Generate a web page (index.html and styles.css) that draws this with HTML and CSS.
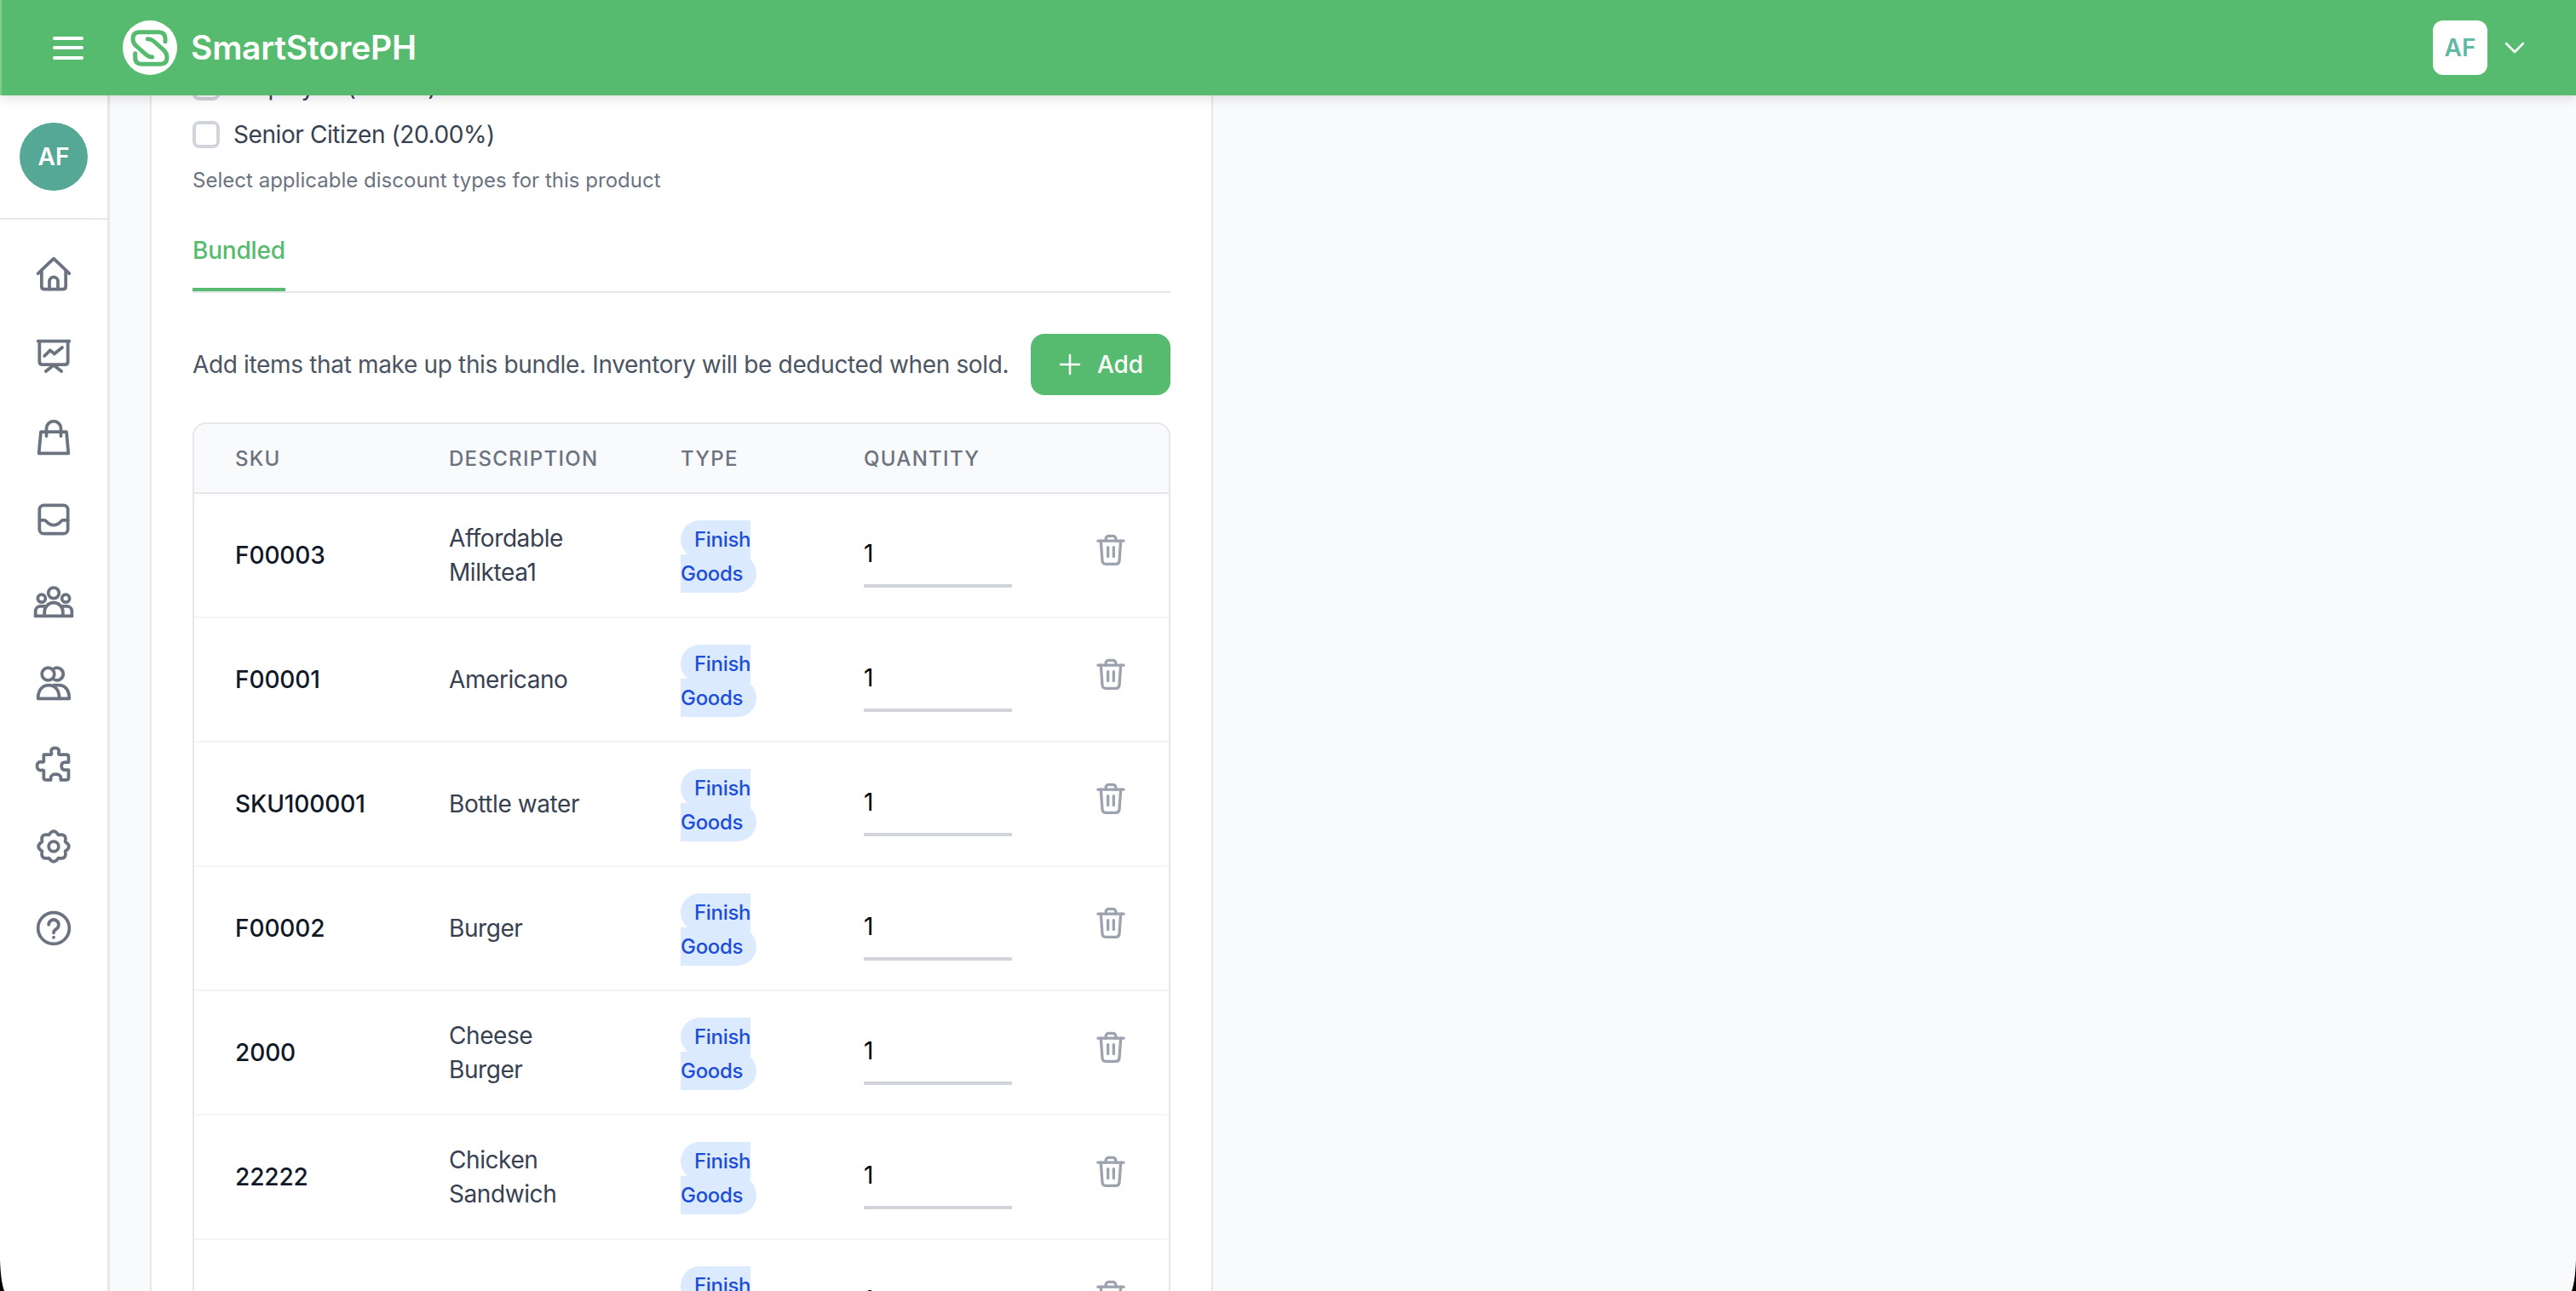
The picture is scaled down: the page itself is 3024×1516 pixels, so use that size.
FILE: index.html
```html
<!DOCTYPE html>
<html lang="en">
<head>
<meta charset="utf-8">
<title>SmartStorePH</title>
<link rel="stylesheet" href="styles.css">
</head>
<body>
<header class="topbar">
  <div class="topbar-left">
    <button class="menu-btn" aria-label="Menu">
      <svg width="36" height="30" viewBox="0 0 36 30" fill="none" stroke="#fff" stroke-width="4" stroke-linecap="round"><path d="M2 4H34M2 15H34M2 27H34"/></svg>
    </button>
    <svg class="logo" width="64" height="64" viewBox="42 30 192 192" fill="none">
      <circle cx="138" cy="126" r="96" fill="#fff"/>
      <g stroke="#57bb6f" stroke-width="15" stroke-linecap="round" stroke-linejoin="round">
        <path d="M192 104V94Q192 71 168 71H102Q78 71 78 95Q78 110 90 120L126 152Q134 159 146 159"/>
        <path d="M86 146V160Q86 184 110 184H174Q198 184 198 160Q198 145 186 134L150 102Q142 95 130 95"/>
      </g>
    </svg>
    <span class="brand">SmartStorePH</span>
  </div>
  <div class="topbar-right">
    <span class="user-chip">AF</span>
    <svg width="24" height="14" viewBox="0 0 24 14" fill="none" stroke="#fff" stroke-width="2.5" stroke-linecap="round" stroke-linejoin="round"><path d="M2 2L12 12L22 2"/></svg>
  </div>
</header>

<div class="shell">
  <aside class="sidebar">
    <div class="side-top"><span class="side-avatar">AF</span></div>
    <nav class="side-nav">
      <svg class="nav-icon" viewBox="0 0 24 24"><path d="M1 11.5L12 1L23 11.5"/><path d="M3.5 9.5V20.5Q3.5 22.5 5.5 22.5H18.5Q20.5 22.5 20.5 20.5V9.5"/><path d="M9 22.5V17A3 3 0 0 1 15 17V22.5"/></svg>
      <svg class="nav-icon" viewBox="0 0 24 24"><path d="M1 1.5H23"/><path d="M2 1.5V16Q2 18 4 18H20Q22 18 22 16V1.5"/><path d="M6.5 22.8L12 18.5L17.5 22.8"/><path d="M5.5 12L9.5 8L12.5 10.5L18 6"/></svg>
      <svg class="nav-icon" viewBox="0 0 24 24"><path d="M3 7.8H21L22.4 23H1.6Z"/><path d="M6.9 10.8V5.5A5.1 5.1 0 0 1 17.1 5.5V10.8"/></svg>
      <svg class="nav-icon" viewBox="0 0 24 24"><rect x="2" y="2" width="20" height="20" rx="3"/><path d="M2 12.5H5.5C7 12.5 7.5 16 12 16C16.5 16 17 12.5 18.5 12.5H22"/></svg>
      <svg class="nav-icon" viewBox="0 0 24 24"><circle cx="12" cy="6.2" r="3.8"/><circle cx="3.5" cy="10" r="2.7"/><circle cx="20.5" cy="10" r="2.7"/><path d="M-.8 22.4H24.8"/><path d="M-.8 22.4V19A3.5 3.5 0 0 1 2.7 15.5H5.5"/><path d="M5.5 22.4V19.5A6.5 6.5 0 0 1 18.5 19.5V22.4"/><path d="M18.5 15.5H21.3A3.5 3.5 0 0 1 24.8 19V22.4"/></svg>
      <svg class="nav-icon" viewBox="0 0 24 24"><circle cx="8.1" cy="5.7" r="4.4"/><path d="M12.5 1.7A4.4 4.4 0 1 1 12.5 9.7"/><path d="M1 23C1 17 4 13.5 8.5 13.5C13 13.5 16 17 16 23Z"/><path d="M12 13.6H16C20 13.6 23 17 23 23H16"/></svg>
      <svg class="nav-icon" viewBox="0 0 24 24"><path d="M5 4.9H10C10.6 4.9 10.6 3.7 10.3 2.7C10 .9 11.5.2 13 .2C14.5.2 16 .9 15.7 2.7C15.4 3.7 15.4 4.9 16 4.9H21Q22.5 4.9 22.5 6.4V10.2H20C18 10.2 17.5 11.7 17.5 12.9C17.5 14.2 18 15.7 20 15.7H22.5V21.2Q22.5 22.7 21 22.7H17V21.2C17 19.7 15.5 18.7 13.5 18.7C11.5 18.7 10 19.7 10 21.2V22.7H6.5Q5 22.7 5 21.2V16.2C5 15.7 4 15.7 3 15.9C1.2 16.2.3 14.5.3 12.9C.3 11.3 1.2 9.7 3 10C4 10.2 5 10.2 5 9.7V4.9Z"/></svg>
      <svg class="nav-icon" viewBox="0 0 24 24"><path d="M8.63 3.87Q12-1.3 15.37 3.87Q21.4 2.6 20.13 8.63Q25.3 12 20.13 15.37Q21.4 21.4 15.37 20.13Q12 25.3 8.63 20.13Q2.6 21.4 3.87 15.37Q-1.3 12 3.87 8.63Q2.6 2.6 8.63 3.87Z"/><circle cx="12" cy="12" r="3.5"/></svg>
      <svg class="nav-icon" viewBox="0 0 24 24"><circle cx="12" cy="12" r="11"/><path d="M8.5 9.5A3.5 3.5 0 1 1 14 12.4C13 13.1 12 13.7 12 15.2"/><path d="M12 18.4V18.5"/></svg>
    </nav>
  </aside>

  <main class="content">
    <section class="card">
      <div class="checks">
        <label class="check-row"><input type="checkbox" class="check"><span>Employee (0.00%)</span></label>
        <label class="check-row"><input type="checkbox" class="check"><span>Senior Citizen (20.00%)</span></label>
      </div>
      <p class="helper">Select applicable discount types for this product</p>

      <div class="tabs"><span class="tab">Bundled</span></div>

      <div class="bundle-bar">
        <p class="bundle-text">Add items that make up this bundle. Inventory will be deducted when sold.</p>
        <button class="add-btn">
          <svg width="28" height="28" viewBox="0 0 28 28" fill="none" stroke="#fff" stroke-width="2.5" stroke-linecap="round"><path d="M14 3V25M3 14H25"/></svg>
          Add
        </button>
      </div>

      <div class="table-wrap">
        <table class="items">
          <colgroup>
            <col class="col-sku"><col class="col-desc"><col class="col-type"><col class="col-qty"><col class="col-act">
          </colgroup>
          <thead>
            <tr><th>SKU</th><th>Description</th><th>Type</th><th>Quantity</th><th></th></tr>
          </thead>
          <tbody>
            <tr>
              <td class="sku">F00003</td><td class="desc">Affordable Milktea1</td>
              <td class="type"><span class="badge">Finish Goods</span></td>
              <td><input class="qty" type="text" value="1"></td>
              <td class="act"><svg class="trash" viewBox="0 0 24 24"><path d="M3 5.5H21"/><path d="M8.5 5.5V4A2 2 0 0 1 10.5 2H13.5A2 2 0 0 1 15.5 4V5.5"/><path d="M5 5.5L6 19.5Q6.2 21.8 8.5 21.8H15.5Q17.8 21.8 18 19.5L19 5.5"/><path d="M10 10V16.5M14 10V16.5"/></svg></td>
            </tr>
            <tr>
              <td class="sku">F00001</td><td class="desc">Americano</td>
              <td class="type"><span class="badge">Finish Goods</span></td>
              <td><input class="qty" type="text" value="1"></td>
              <td class="act"><svg class="trash" viewBox="0 0 24 24"><path d="M3 5.5H21"/><path d="M8.5 5.5V4A2 2 0 0 1 10.5 2H13.5A2 2 0 0 1 15.5 4V5.5"/><path d="M5 5.5L6 19.5Q6.2 21.8 8.5 21.8H15.5Q17.8 21.8 18 19.5L19 5.5"/><path d="M10 10V16.5M14 10V16.5"/></svg></td>
            </tr>
            <tr>
              <td class="sku">SKU100001</td><td class="desc">Bottle water</td>
              <td class="type"><span class="badge">Finish Goods</span></td>
              <td><input class="qty" type="text" value="1"></td>
              <td class="act"><svg class="trash" viewBox="0 0 24 24"><path d="M3 5.5H21"/><path d="M8.5 5.5V4A2 2 0 0 1 10.5 2H13.5A2 2 0 0 1 15.5 4V5.5"/><path d="M5 5.5L6 19.5Q6.2 21.8 8.5 21.8H15.5Q17.8 21.8 18 19.5L19 5.5"/><path d="M10 10V16.5M14 10V16.5"/></svg></td>
            </tr>
            <tr>
              <td class="sku">F00002</td><td class="desc">Burger</td>
              <td class="type"><span class="badge">Finish Goods</span></td>
              <td><input class="qty" type="text" value="1"></td>
              <td class="act"><svg class="trash" viewBox="0 0 24 24"><path d="M3 5.5H21"/><path d="M8.5 5.5V4A2 2 0 0 1 10.5 2H13.5A2 2 0 0 1 15.5 4V5.5"/><path d="M5 5.5L6 19.5Q6.2 21.8 8.5 21.8H15.5Q17.8 21.8 18 19.5L19 5.5"/><path d="M10 10V16.5M14 10V16.5"/></svg></td>
            </tr>
            <tr>
              <td class="sku">2000</td><td class="desc">Cheese Burger</td>
              <td class="type"><span class="badge">Finish Goods</span></td>
              <td><input class="qty" type="text" value="1"></td>
              <td class="act"><svg class="trash" viewBox="0 0 24 24"><path d="M3 5.5H21"/><path d="M8.5 5.5V4A2 2 0 0 1 10.5 2H13.5A2 2 0 0 1 15.5 4V5.5"/><path d="M5 5.5L6 19.5Q6.2 21.8 8.5 21.8H15.5Q17.8 21.8 18 19.5L19 5.5"/><path d="M10 10V16.5M14 10V16.5"/></svg></td>
            </tr>
            <tr>
              <td class="sku">22222</td><td class="desc">Chicken Sandwich</td>
              <td class="type"><span class="badge">Finish Goods</span></td>
              <td><input class="qty" type="text" value="1"></td>
              <td class="act"><svg class="trash" viewBox="0 0 24 24"><path d="M3 5.5H21"/><path d="M8.5 5.5V4A2 2 0 0 1 10.5 2H13.5A2 2 0 0 1 15.5 4V5.5"/><path d="M5 5.5L6 19.5Q6.2 21.8 8.5 21.8H15.5Q17.8 21.8 18 19.5L19 5.5"/><path d="M10 10V16.5M14 10V16.5"/></svg></td>
            </tr>
            <tr>
              <td class="sku"></td><td class="desc"></td>
              <td class="type"><span class="badge">Finish Goods</span></td>
              <td><input class="qty" type="text" value="1"></td>
              <td class="act"><svg class="trash" viewBox="0 0 24 24"><path d="M3 5.5H21"/><path d="M8.5 5.5V4A2 2 0 0 1 10.5 2H13.5A2 2 0 0 1 15.5 4V5.5"/><path d="M5 5.5L6 19.5Q6.2 21.8 8.5 21.8H15.5Q17.8 21.8 18 19.5L19 5.5"/><path d="M10 10V16.5M14 10V16.5"/></svg></td>
            </tr>
          </tbody>
        </table>
      </div>
    </section>
  </main>
</div>

<svg class="corner corner-left" width="6" height="36" viewBox="0 0 6 36"><path d="M0 0C.6 14 1.8 27 5 36H0Z"/></svg>
<svg class="corner corner-right" width="6" height="36" viewBox="0 0 6 36"><path d="M6 0C5.4 14 4.2 27 1 36H6Z"/></svg>
</body>
</html>
```
FILE: styles.css
```css
* { box-sizing: border-box; }

html, body {
  margin: 0;
  height: 100%;
  overflow: hidden;
}

body {
  display: flex;
  flex-direction: column;
  position: relative;
  font-family: Inter, "Liberation Sans", sans-serif;
  font-size: 28px;
  line-height: 40px;
  letter-spacing: -.42px;
  color: #111827;
  background: #f9fafb;
}

/* Top bar */
.topbar {
  flex: none;
  height: 112px;
  display: flex;
  align-items: center;
  justify-content: space-between;
  padding: 0 60px 0 60px;
  background: #57bb6f;
  border-left: 2px solid #7fcb92;
  box-shadow: 0 4px 12px rgba(0, 0, 0, .12);
  position: relative;
  z-index: 5;
}

.topbar-left, .topbar-right { display: flex; align-items: center; }

.menu-btn {
  display: block;
  width: 36px;
  height: 30px;
  padding: 0;
  border: 0;
  background: none;
}

.menu-btn svg { display: block; }

.logo { margin-left: 46px; }

.brand {
  margin-left: 16px;
  font-size: 39px;
  line-height: 48px;
  font-weight: 600;
  letter-spacing: -.2px;
  color: #fff;
}

.user-chip {
  width: 64px;
  height: 64px;
  display: flex;
  align-items: center;
  justify-content: center;
  background: #fff;
  border-radius: 12px;
  color: #5fb9a3;
  font-size: 28px;
  font-weight: 600;
  letter-spacing: 0;
}

.topbar-right svg { margin-left: 20px; }

/* Shell */
.shell {
  flex: 1;
  min-height: 0;
  display: flex;
}

.sidebar {
  flex: none;
  width: 129px;
  background: #fff;
  border-right: 3px solid #e5e7eb;
}

.side-top {
  height: 146px;
  padding: 32px 0 0 23px;
  border-bottom: 2px solid #e5e7eb;
}

.side-avatar {
  width: 80px;
  height: 80px;
  display: flex;
  align-items: center;
  justify-content: center;
  border-radius: 50%;
  background: #55a896;
  color: #fff;
  font-size: 28px;
  font-weight: 600;
  letter-spacing: 0;
}

.side-nav {
  display: flex;
  flex-direction: column;
  align-items: flex-start;
  gap: 56px;
  padding: 44px 0 0 43px;
}

.nav-icon {
  display: block;
  width: 40px;
  height: 40px;
  overflow: visible;
  fill: none;
  stroke: #6b7280;
  stroke-width: 2.25;
  stroke-linecap: round;
  stroke-linejoin: round;
}

/* Main */
.content {
  flex: 1;
  min-width: 0;
  overflow: hidden;
  padding: 0 0 0 47px;
}

.card {
  width: 1248px;
  min-height: 100%;
  padding: 0 48px;
  background: #fff;
  border-left: 2px solid #e5e7eb;
  border-right: 2px solid #e5e7eb;
}

.checks {
  display: flex;
  flex-direction: column;
  gap: 16px;
  margin-top: -30px;
}

.check-row {
  display: flex;
  align-items: center;
  gap: 16px;
  color: #374151;
}

.check {
  appearance: none;
  width: 32px;
  height: 32px;
  margin: 0;
  background: #fff;
  border: 4px solid #d1d5db;
  border-radius: 8px;
}

.helper {
  margin: 18px 0 0;
  font-size: 24px;
  line-height: 32px;
  letter-spacing: .02px;
  color: #6b7280;
}

.tabs {
  margin-top: 46px;
  border-bottom: 2px solid #e5e7eb;
}

.tab {
  display: inline-block;
  padding-bottom: 24px;
  border-bottom: 4px solid #57bb6f;
  color: #57bb6f;
  font-weight: 500;
  letter-spacing: -.2px;
  vertical-align: top;
}

.bundle-bar {
  display: flex;
  align-items: center;
  justify-content: space-between;
  margin-top: 48px;
}

.bundle-text {
  margin: 0;
  white-space: nowrap;
  letter-spacing: -.34px;
  color: #4b5563;
}

.add-btn {
  flex: none;
  display: flex;
  align-items: center;
  justify-content: center;
  gap: 18px;
  width: 164px;
  height: 72px;
  padding: 0;
  border: 0;
  border-radius: 16px;
  background: #57bb6f;
  color: #fff;
  font: 500 28px/40px Inter, "Liberation Sans", sans-serif;
}

/* Table */
.table-wrap {
  margin-top: 32px;
  border: 2px solid #e5e7eb;
  border-radius: 16px;
  overflow: hidden;
}

.items {
  width: 1144px;
  table-layout: fixed;
  border-collapse: separate;
  border-spacing: 0;
}

.col-sku { width: 251px; }
.col-desc { width: 272px; }
.col-type { width: 215px; }
.col-qty { width: 270px; }
.col-act { width: 136px; }

.items th {
  height: 82px;
  padding: 2px 48px 0;
  text-align: left;
  font-size: 24px;
  line-height: 32px;
  font-weight: 500;
  letter-spacing: 1.3px;
  text-transform: uppercase;
  color: #6b7280;
  background: #f9fafb;
  border-bottom: 2px solid #e5e7eb;
}

.items td {
  height: 146px;
  padding: 0 48px;
  vertical-align: middle;
  border-bottom: 2px solid #f3f4f6;
}

.items .sku { font-weight: 500; letter-spacing: -.1px; color: #111827; }
.items .desc { color: #374151; }
.items .type { padding-top: 4px; font-size: 24px; }

.badge {
  padding: 8px 16px;
  border-radius: 9999px;
  background: #dbeafe;
  color: #1d4ed8;
  font-size: 24px;
  line-height: 40px;
  font-weight: 500;
  letter-spacing: -.3px;
}

.qty {
  display: block;
  width: 174px;
  height: 76px;
  padding: 0;
  border: 0;
  border-bottom: 4px solid #d1d5db;
  background: none;
  outline: 0;
  color: #000;
  font: 400 28px/40px Inter, "Liberation Sans", sans-serif;
}

.items .act { padding: 0; text-align: center; }

.trash {
  display: block;
  width: 40px;
  height: 40px;
  margin: 0 auto 12px;
  fill: none;
  stroke: #9ca3af;
  stroke-width: 2;
  stroke-linecap: round;
  stroke-linejoin: round;
}

/* Rounded window corners at the bottom edge of the capture */
.corner {
  position: absolute;
  bottom: 0;
  fill: #000;
  z-index: 10;
}

.corner-left { left: 0; }
.corner-right { right: 0; }
```
